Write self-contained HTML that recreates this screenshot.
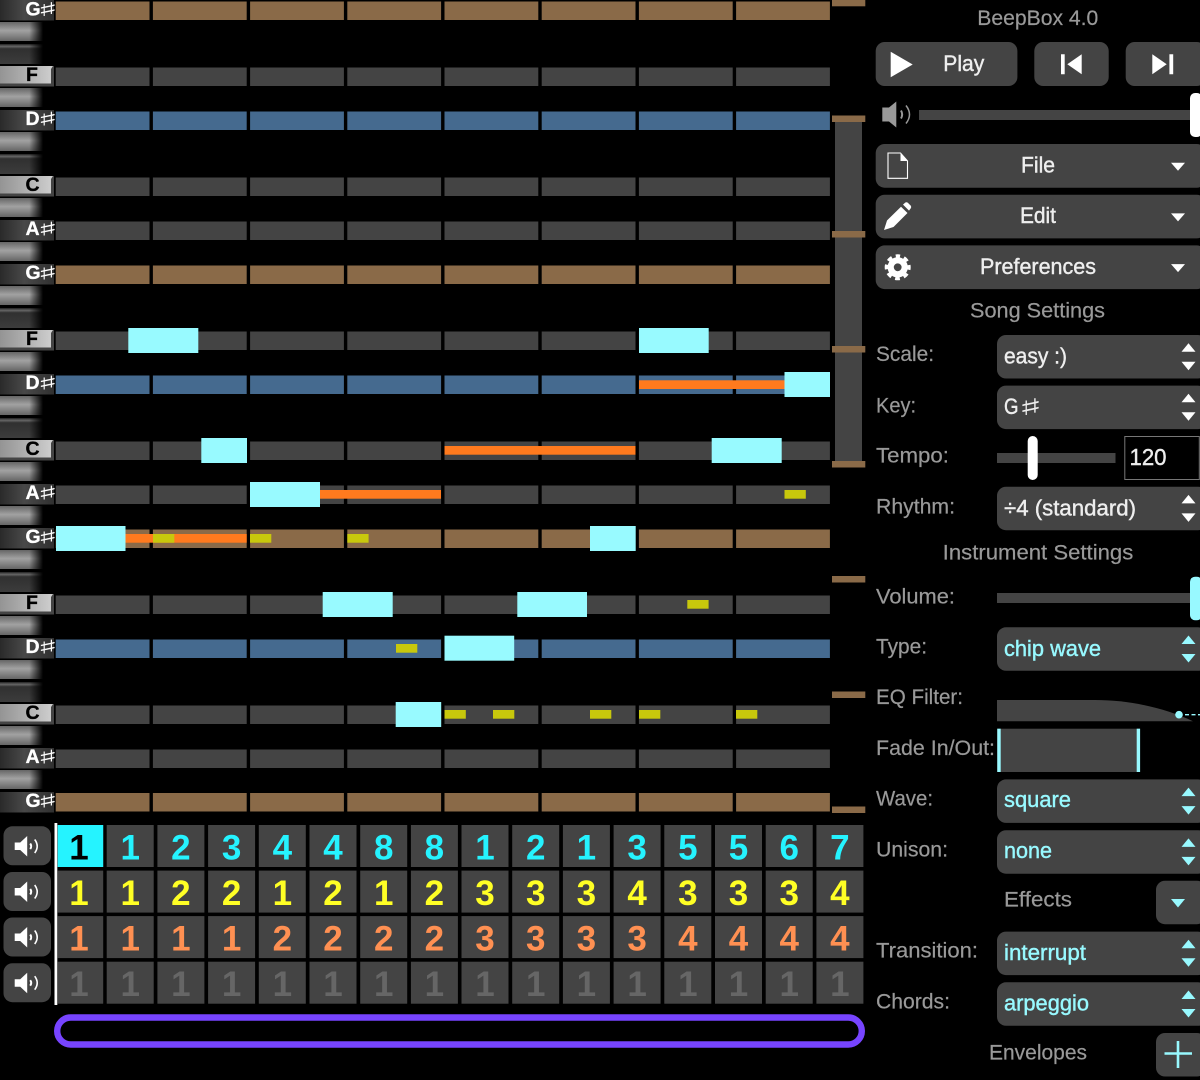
<!DOCTYPE html>
<html lang="en"><head><meta charset="utf-8"><title>BeepBox 4.0</title>
<style>
html,body{margin:0;padding:0;background:#000;width:1200px;height:1080px;overflow:hidden}
svg{display:block;font-family:"Liberation Sans",sans-serif}
.l{fill:#999;font-size:21.5px;stroke:#999;stroke-width:.2}
.b{fill:#eee;font-size:22px;stroke:#eee;stroke-width:.4}
.s{fill:#eee;font-size:22px;stroke:#eee;stroke-width:.4}
.c{fill:#98f9ff;font-size:22px;stroke:#98f9ff;stroke-width:.4}
.n{font-size:35px;font-weight:bold;text-anchor:middle}
.kw{font-size:19.5px;font-weight:bold;fill:#fff;stroke:#fff;stroke-width:.3}
.kb{font-size:19.5px;font-weight:bold;fill:#000;stroke:#000;stroke-width:.3}
.sh{font-size:19px;fill:#fff;font-family:"DejaVu Sans",sans-serif}
</style></head><body>
<svg width="1200" height="1080" viewBox="0 0 1200 1080" xmlns="http://www.w3.org/2000/svg">
<defs>
<linearGradient id="wv" x1="0" y1="0" x2="0" y2="1"><stop offset="0" stop-color="#666"/><stop offset=".45" stop-color="#a2a2a2"/><stop offset="1" stop-color="#666"/></linearGradient>
<linearGradient id="fade" x1="0" y1="0" x2="1" y2="0"><stop offset="0" stop-color="#000" stop-opacity="0"/><stop offset=".68" stop-color="#000" stop-opacity="0"/><stop offset="1" stop-color="#000"/></linearGradient>
<linearGradient id="lw" x1="0" y1="0" x2="1" y2="0"><stop offset="0" stop-color="#949494"/><stop offset=".5" stop-color="#b0b0b0"/><stop offset="1" stop-color="#cfcfcf"/></linearGradient>
<linearGradient id="lb" x1="0" y1="0" x2="1" y2="0"><stop offset="0" stop-color="#2a2a2a"/><stop offset=".45" stop-color="#484848"/><stop offset="1" stop-color="#303030"/></linearGradient>
<linearGradient id="ub" x1="0" y1="0" x2="0" y2="1"><stop offset="0" stop-color="#222"/><stop offset=".12" stop-color="#666"/><stop offset=".24" stop-color="#303030"/><stop offset="1" stop-color="#3c3c3c"/></linearGradient>
<g id="row">
<rect x="55.7" y="0" width="93.8" height="18.5"/><rect x="152.9" y="0" width="93.8" height="18.5"/><rect x="250.1" y="0" width="93.8" height="18.5"/><rect x="347.3" y="0" width="93.8" height="18.5"/><rect x="444.5" y="0" width="93.8" height="18.5"/><rect x="541.7" y="0" width="93.8" height="18.5"/><rect x="638.9" y="0" width="93.8" height="18.5"/><rect x="736.1" y="0" width="93.8" height="18.5"/>
</g>
<g id="kw"><rect x="0" y="0" width="43" height="19" fill="url(#wv)"/><rect x="0" y="0" width="43" height="20" fill="url(#fade)"/></g>
<g id="kub"><rect x="0" y="0" width="43" height="20" fill="url(#ub)"/><rect x="0" y="0" width="43" height="20" fill="url(#fade)"/></g>
<g id="klw"><rect x="0" y="0" width="54" height="20.5" fill="#444"/><path d="M0 0H53L51 3V17.5H0Z" fill="url(#lw)"/></g>
<rect id="klb" x="0" y="0" width="54" height="20.5" fill="url(#lb)"/>
<g id="cells">
<rect x="57.7" width="45.5" height="42"/><rect x="106.7" width="47" height="42"/><rect x="157.4" width="47" height="42"/><rect x="208.1" width="47" height="42"/><rect x="258.8" width="47" height="42"/><rect x="309.5" width="47" height="42"/><rect x="360.2" width="47" height="42"/><rect x="410.9" width="47" height="42"/><rect x="461.5" width="47" height="42"/><rect x="512.2" width="47" height="42"/><rect x="562.9" width="47" height="42"/><rect x="613.6" width="47" height="42"/><rect x="664.3" width="47" height="42"/><rect x="715" width="47" height="42"/><rect x="765.7" width="47" height="42"/><rect x="816.4" width="47" height="42"/>
</g>
<g id="spk" fill="#fff"><path d="M0 6.5H5.5L12.5 0V20.5L5.5 14H0Z"/><path d="M15.5 7.5Q17.5 10.2 15.5 13" fill="none" stroke="#fff" stroke-width="2"/><path d="M20 3.5Q25 10.2 20 17" fill="none" stroke="#fff" stroke-width="1.6"/></g>
<g id="ud"><path d="M-7 16.7L0 8.2L7 16.7Z"/><path d="M-7 26.7H7L0 35.2Z"/></g>
</defs>
<rect width="1200" height="1080" fill="#000"/>

<!-- piano keys -->
<use href="#klb" y="0"/><use href="#kw" y="22"/><use href="#kub" y="44"/><use href="#klw" y="66"/><use href="#kw" y="88"/><use href="#klb" y="110"/><use href="#kw" y="132"/><use href="#kub" y="154"/><use href="#klw" y="176"/><use href="#kw" y="198"/><use href="#klb" y="220"/><use href="#kw" y="242"/>
<use href="#klb" y="264"/><use href="#kw" y="286"/><use href="#kub" y="308"/><use href="#klw" y="330"/><use href="#kw" y="352"/><use href="#klb" y="374"/><use href="#kw" y="396"/><use href="#kub" y="418"/><use href="#klw" y="440"/><use href="#kw" y="462"/><use href="#klb" y="484"/><use href="#kw" y="506"/>
<use href="#klb" y="528"/><use href="#kw" y="550"/><use href="#kub" y="572"/><use href="#klw" y="594"/><use href="#kw" y="616"/><use href="#klb" y="638"/><use href="#kw" y="660"/><use href="#kub" y="682"/><use href="#klw" y="704"/><use href="#kw" y="726"/><use href="#klb" y="748"/><use href="#kw" y="770"/><use href="#klb" y="792"/>

<!-- key labels -->
<g>
<text class="kw" x="25.5" y="15.3">G</text><text class="sh" x="37" y="16" textLength="21" lengthAdjust="spacingAndGlyphs">♯</text>
<text class="kb" x="26" y="81">F</text>
<text class="kw" x="25.5" y="125">D</text><text class="sh" x="37" y="125.7" textLength="21" lengthAdjust="spacingAndGlyphs">♯</text>
<text class="kb" x="25.5" y="191">C</text>
<text class="kw" x="25.5" y="235">A</text><text class="sh" x="37" y="235.7" textLength="21" lengthAdjust="spacingAndGlyphs">♯</text>
<text class="kw" x="25.5" y="279">G</text><text class="sh" x="37" y="279.7" textLength="21" lengthAdjust="spacingAndGlyphs">♯</text>
<text class="kb" x="26" y="345">F</text>
<text class="kw" x="25.5" y="389">D</text><text class="sh" x="37" y="389.7" textLength="21" lengthAdjust="spacingAndGlyphs">♯</text>
<text class="kb" x="25.5" y="455">C</text>
<text class="kw" x="25.5" y="499">A</text><text class="sh" x="37" y="499.7" textLength="21" lengthAdjust="spacingAndGlyphs">♯</text>
<text class="kw" x="25.5" y="543">G</text><text class="sh" x="37" y="543.7" textLength="21" lengthAdjust="spacingAndGlyphs">♯</text>
<text class="kb" x="26" y="609">F</text>
<text class="kw" x="25.5" y="653">D</text><text class="sh" x="37" y="653.7" textLength="21" lengthAdjust="spacingAndGlyphs">♯</text>
<text class="kb" x="25.5" y="719">C</text>
<text class="kw" x="25.5" y="763">A</text><text class="sh" x="37" y="763.7" textLength="21" lengthAdjust="spacingAndGlyphs">♯</text>
<text class="kw" x="25.5" y="807">G</text><text class="sh" x="37" y="807.7" textLength="21" lengthAdjust="spacingAndGlyphs">♯</text>
</g>

<!-- pattern rows -->
<use href="#row" y="1.5" fill="#8a6a48"/>
<use href="#row" y="67.5" fill="#444"/>
<use href="#row" y="111.5" fill="#456a8f"/>
<use href="#row" y="177.5" fill="#444"/>
<use href="#row" y="221.5" fill="#444"/>
<use href="#row" y="265.5" fill="#8a6a48"/>
<use href="#row" y="331.5" fill="#444"/>
<use href="#row" y="375.5" fill="#456a8f"/>
<use href="#row" y="441.5" fill="#444"/>
<use href="#row" y="485.5" fill="#444"/>
<use href="#row" y="529.5" fill="#8a6a48"/>
<use href="#row" y="595.5" fill="#444"/>
<use href="#row" y="639.5" fill="#456a8f"/>
<use href="#row" y="705.5" fill="#444"/>
<use href="#row" y="749.5" fill="#444"/>
<use href="#row" y="793" fill="#8a6a48"/>

<!-- orange notes -->
<g fill="#ff7a1e">
<rect x="639" y="380.3" width="146" height="8.7"/>
<rect x="444.5" y="446" width="191" height="8.7"/>
<rect x="320" y="490" width="121" height="8.7"/>
<rect x="125.5" y="534" width="121.2" height="8.7"/>
</g>
<!-- yellow notes -->
<g fill="#c8c80c">
<rect x="784.5" y="490" width="21.3" height="8.7"/>
<rect x="153" y="534" width="21.3" height="8.7"/><rect x="250" y="534" width="21.3" height="8.7"/><rect x="347.3" y="534" width="21.3" height="8.7"/>
<rect x="687.3" y="600" width="21.3" height="8.7"/>
<rect x="396" y="644" width="21.3" height="8.7"/>
<rect x="444.5" y="710" width="21.3" height="8.7"/><rect x="493" y="710" width="21.3" height="8.7"/><rect x="590" y="710" width="21.3" height="8.7"/><rect x="639" y="710" width="21.3" height="8.7"/><rect x="736" y="710" width="21.3" height="8.7"/>
</g>
<!-- cyan notes -->
<g fill="#98faff">
<rect x="128.3" y="328" width="70" height="25"/><rect x="639" y="328" width="69.7" height="25"/>
<rect x="784.5" y="372" width="45.5" height="25"/>
<rect x="201.3" y="438" width="45.7" height="25"/><rect x="711.7" y="438" width="70" height="25"/>
<rect x="250" y="482" width="70" height="25"/>
<rect x="56" y="526" width="69.5" height="25"/><rect x="590" y="526" width="45.7" height="25"/>
<rect x="322.7" y="592" width="70" height="25"/><rect x="517.3" y="592" width="69.7" height="25"/>
<rect x="444.5" y="635.7" width="69.7" height="25"/>
<rect x="395.7" y="702" width="45.5" height="25"/>
</g>

<!-- octave scrollbar -->
<rect x="835" y="122" width="27" height="339" fill="#444"/>
<g fill="#8a6a48">
<rect x="832" y="0" width="33.3" height="6.3"/><rect x="832" y="115.5" width="33.3" height="6.5"/><rect x="832" y="231" width="33.3" height="6.5"/><rect x="832" y="346" width="33.3" height="6.5"/><rect x="832" y="461" width="33.3" height="6.5"/><rect x="832" y="576" width="33.3" height="6.5"/><rect x="832" y="691.5" width="33.3" height="6.5"/><rect x="832" y="806.5" width="33.3" height="6.5"/>
</g>

<!-- mute buttons -->
<g fill="#444">
<rect x="3.5" y="826.3" width="47.5" height="39" rx="9"/><rect x="3.5" y="872" width="47.5" height="39" rx="9"/><rect x="3.5" y="917.5" width="47.5" height="39" rx="9"/><rect x="3.5" y="963.2" width="47.5" height="39" rx="9"/>
</g>
<use href="#spk" x="14.7" y="836"/><use href="#spk" x="14.7" y="881.5"/><use href="#spk" x="14.7" y="927"/><use href="#spk" x="14.7" y="972.7"/>

<!-- channel grid -->
<use href="#cells" y="825" fill="#444"/><use href="#cells" y="870.6" fill="#444"/><use href="#cells" y="916.1" fill="#444"/><use href="#cells" y="961.7" fill="#444"/>
<rect x="57.7" y="825" width="45.5" height="42" fill="#25f3ff"/>
<rect x="54.5" y="823" width="2.8" height="182" fill="#fff"/>
<g class="num">
<text class="n" y="859.5" x="79" fill="#000">1</text>
<text class="n" y="859.5" fill="#25f3ff" x="130.2 180.9 231.6 282.3 333 383.7 434.4 485 535.7 586.4 637.1 687.8 738.5 789.2 839.9">123448812135567</text>
<text class="n" y="905" fill="#ffff25" x="79 130.2 180.9 231.6 282.3 333 383.7 434.4 485 535.7 586.4 637.1 687.8 738.5 789.2 839.9">1122121233343334</text>
<text class="n" y="950.5" fill="#ff9052" x="79 130.2 180.9 231.6 282.3 333 383.7 434.4 485 535.7 586.4 637.1 687.8 738.5 789.2 839.9">1111222233334444</text>
<text class="n" y="996" fill="#666" x="79 130.2 180.9 231.6 282.3 333 383.7 434.4 485 535.7 586.4 637.1 687.8 738.5 789.2 839.9">1111111111111111</text>
</g>

<!-- purple box -->
<rect x="57.2" y="1017.5" width="804.6" height="27" rx="13.5" fill="none" stroke="#7744ff" stroke-width="6.4"/>

<!-- right panel -->
<text x="977.3" y="25" class="l" textLength="121" lengthAdjust="spacingAndGlyphs">BeepBox 4.0</text>

<g fill="#444">
<rect x="875.7" y="42" width="141.7" height="44" rx="9"/>
<rect x="1034.3" y="42" width="74.4" height="44" rx="9"/>
<rect x="1125.7" y="42" width="80" height="44" rx="9"/>
<rect x="875.7" y="144" width="330" height="43.7" rx="9"/>
<rect x="875.7" y="194.7" width="330" height="43.7" rx="9"/>
<rect x="875.7" y="245.4" width="330" height="43.7" rx="9"/>
<rect x="919" y="110" width="276" height="10"/>
<rect x="997" y="335" width="210" height="43.5" rx="9"/>
<rect x="997" y="385.6" width="210" height="43.5" rx="9"/>
<rect x="997" y="453" width="118.5" height="10"/>
<rect x="997" y="486.7" width="210" height="43.5" rx="9"/>
<rect x="997" y="593" width="198" height="10"/>
<rect x="997" y="627.3" width="210" height="43.5" rx="9"/>
<rect x="997" y="728.7" width="143" height="43.3"/>
<rect x="997" y="779.4" width="210" height="43.5" rx="9"/>
<rect x="997" y="830.2" width="210" height="43.5" rx="9"/>
<rect x="1156" y="880.7" width="50" height="43.5" rx="9"/>
<rect x="997" y="931.6" width="210" height="43.5" rx="9"/>
<rect x="997" y="982.3" width="210" height="43.5" rx="9"/>
<rect x="1156" y="1033" width="50" height="43.5" rx="9"/>
<path d="M997 700H1095C1130 700 1165 708 1193 721.3H997Z"/>
</g>

<!-- transport icons -->
<path d="M890.7 51.7L912.7 64.5L890.7 77.3Z" fill="#fff"/>
<text x="943.3" y="71" class="b" textLength="41" lengthAdjust="spacingAndGlyphs">Play</text>
<path d="M1061 54.3H1064.7V74.3H1061ZM1081.7 54.3V74.3L1067.3 64.3Z" fill="#fff"/>
<path d="M1169.4 54.3H1173.2V74.3H1169.4ZM1152.3 54.3V74.3L1166.7 64.3Z" fill="#fff"/>

<!-- volume -->
<path d="M882.3 107.5H889L896.3 101.5V127.5L889 121.5H882.3Z" fill="#999"/>
<path d="M901 110.5Q903.3 114.5 901 118.5" fill="none" stroke="#999" stroke-width="2"/>
<path d="M906 105.5Q913 114.5 906 123.5" fill="none" stroke="#999" stroke-width="1.5"/>
<rect x="1190" y="93" width="12" height="44" rx="5" fill="#fff"/>

<!-- File -->
<path d="M888 153H900.5L907.5 161V178.3H888Z" fill="none" stroke="#fff" stroke-width="1.1"/>
<path d="M900.5 153V161H907.5Z" fill="#fff"/>
<text x="1021" y="172.3" class="b" textLength="34" lengthAdjust="spacingAndGlyphs">File</text>
<path d="M1171 162.7H1185L1178 170.7Z" fill="#fff"/>
<!-- Edit -->
<path d="M884 230L887 220.5L901 206.7L907.5 213L893.5 227Z" fill="#fff"/>
<path d="M903 204.6L905.2 202.6Q906.5 201.8 907.8 202.7L910.8 205.7Q911.7 207 910.8 208.3L909 210.6Z" fill="#fff"/>
<text x="1020" y="223" class="b" textLength="36" lengthAdjust="spacingAndGlyphs">Edit</text>
<path d="M1171 213.4H1185L1178 221.4Z" fill="#fff"/>
<!-- Preferences -->
<circle cx="897.7" cy="267.3" r="7" fill="none" stroke="#fff" stroke-width="6.2"/>
<circle cx="897.7" cy="267.3" r="11.3" fill="none" stroke="#fff" stroke-width="3.4" stroke-dasharray="4.8 4.07" stroke-dashoffset="2.4" transform="rotate(-90 897.7 267.3)"/>
<text x="980" y="274" class="b" textLength="116" lengthAdjust="spacingAndGlyphs">Preferences</text>
<path d="M1171 264.1H1185L1178 272.1Z" fill="#fff"/>

<!-- Song settings -->
<text x="970" y="317.5" class="l" textLength="135" lengthAdjust="spacingAndGlyphs">Song Settings</text>
<text x="876" y="361" class="l" textLength="58" lengthAdjust="spacingAndGlyphs">Scale:</text>
<text x="876" y="412.5" class="l" textLength="40" lengthAdjust="spacingAndGlyphs">Key:</text>
<text x="876" y="462.7" class="l" textLength="73" lengthAdjust="spacingAndGlyphs">Tempo:</text>
<text x="876" y="513.7" class="l" textLength="79" lengthAdjust="spacingAndGlyphs">Rhythm:</text>
<text x="1004" y="363.3" class="s" textLength="63" lengthAdjust="spacingAndGlyphs">easy :)</text>
<text x="1004" y="414" class="s" textLength="14.5" lengthAdjust="spacingAndGlyphs">G</text>
<text x="1018.2" y="415" class="sh" style="font-size:23px;fill:#eee" textLength="24.5" lengthAdjust="spacingAndGlyphs">♯</text>
<text x="1004" y="515.3" class="s" textLength="132" lengthAdjust="spacingAndGlyphs">÷4 (standard)</text>
<g fill="#fff">
<use href="#ud" x="1188.5" y="335"/><use href="#ud" x="1188.5" y="385.6"/><use href="#ud" x="1188.5" y="486.7"/>
</g>
<rect x="1027.7" y="436" width="10" height="44" rx="5" fill="#fff"/>
<rect x="1124.8" y="436.5" width="74.5" height="43" fill="#000" stroke="#777" stroke-width="1"/>
<text x="1129.5" y="465" class="s" textLength="37" lengthAdjust="spacingAndGlyphs" style="font-size:23px">120</text>

<!-- Instrument settings -->
<text x="942.7" y="559.3" class="l" textLength="190.6" lengthAdjust="spacingAndGlyphs">Instrument Settings</text>
<text x="876" y="603.5" class="l" textLength="79" lengthAdjust="spacingAndGlyphs">Volume:</text>
<rect x="1190" y="576.7" width="12" height="43.5" rx="5" fill="#98f9ff"/>
<text x="876" y="653.3" class="l" textLength="51" lengthAdjust="spacingAndGlyphs">Type:</text>
<text x="1004" y="656" class="c" textLength="97" lengthAdjust="spacingAndGlyphs">chip wave</text>
<text x="876" y="703.8" class="l" textLength="87" lengthAdjust="spacingAndGlyphs">EQ Filter:</text>
<circle cx="1179" cy="714.7" r="3.8" fill="#98f9ff"/>
<path d="M1185 714.7H1200" stroke="#98f9ff" stroke-width="1.4" stroke-dasharray="4 2.5" fill="none"/>
<text x="876" y="755" class="l" textLength="119" lengthAdjust="spacingAndGlyphs">Fade In/Out:</text>
<rect x="997.3" y="728.7" width="3.4" height="43.3" fill="#98f9ff"/>
<rect x="1136.7" y="728.7" width="3.4" height="43.3" fill="#98f9ff"/>
<text x="876" y="805.7" class="l" textLength="57" lengthAdjust="spacingAndGlyphs">Wave:</text>
<text x="1004" y="807" class="c" textLength="67" lengthAdjust="spacingAndGlyphs">square</text>
<text x="876" y="856.7" class="l" textLength="72" lengthAdjust="spacingAndGlyphs">Unison:</text>
<text x="1004" y="858" class="c" textLength="48" lengthAdjust="spacingAndGlyphs">none</text>
<text x="1004" y="906.7" class="l" textLength="68" lengthAdjust="spacingAndGlyphs">Effects</text>
<path d="M1171 899H1185L1178 907.5Z" fill="#98f9ff"/>
<text x="876" y="957.7" class="l" textLength="102" lengthAdjust="spacingAndGlyphs">Transition:</text>
<text x="1004" y="960" class="c" textLength="82" lengthAdjust="spacingAndGlyphs">interrupt</text>
<text x="876" y="1008.3" class="l" textLength="74" lengthAdjust="spacingAndGlyphs">Chords:</text>
<text x="1004" y="1010.5" class="c" textLength="85" lengthAdjust="spacingAndGlyphs">arpeggio</text>
<text x="989" y="1059.3" class="l" textLength="98" lengthAdjust="spacingAndGlyphs">Envelopes</text>
<path d="M1164.5 1053.5H1192M1178 1041V1068" stroke="#98f9ff" stroke-width="2.6" fill="none"/>
<g fill="#98f9ff">
<use href="#ud" x="1188.5" y="627.3"/><use href="#ud" x="1188.5" y="779.4"/><use href="#ud" x="1188.5" y="830.2"/><use href="#ud" x="1188.5" y="931.6"/><use href="#ud" x="1188.5" y="982.3"/>
</g>
</svg>
</body></html>
